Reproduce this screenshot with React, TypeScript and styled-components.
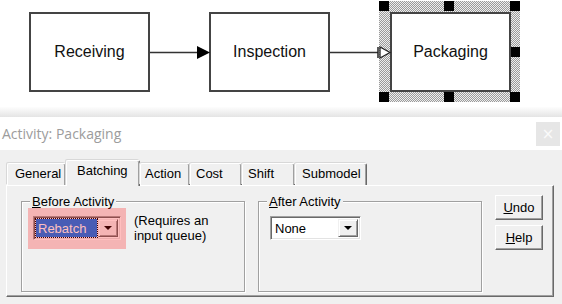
import React from 'react'
import styled, { createGlobalStyle } from 'styled-components'

const Global = createGlobalStyle`
  html, body {
    margin: 0;
    padding: 0;
    background: #f0f0f0;
  }
  body {
    width: 562px;
    height: 304px;
    overflow: hidden;
    font-family: "Liberation Sans", Arial, sans-serif;
    font-size: 13px;
    color: #000;
  }
`

/* ---------- diagram ---------- */

const Canvas = styled.div`
  position: relative;
  height: 107px;
  background: #fff;
`

const Node = styled.div<{ $x: number }>`
  position: absolute;
  left: ${(p) => p.$x}px;
  top: 12px;
  width: 121px;
  height: 80px;
  box-sizing: border-box;
  border: 2px solid #444;
  background: #fff;
  display: flex;
  align-items: center;
  justify-content: center;
  font: 16px "Liberation Sans", Arial, sans-serif;
  color: #111;
`

const Selection = styled.div`
  position: absolute;
  left: 379px;
  top: 1px;
  width: 141px;
  height: 101px;
  background: repeating-conic-gradient(#9a9a9a 0 25%, #eeeeee 0 50%) 0 0 / 2px 2px;
`

const Handle = styled.div<{ $x: number; $y: number }>`
  position: absolute;
  left: ${(p) => p.$x}px;
  top: ${(p) => p.$y}px;
  width: 10px;
  height: 10px;
  background: #000;
`

const Links = styled.svg`
  position: absolute;
  inset: 0;
  pointer-events: none;
`

const WindowShadow = styled.div`
  height: 10px;
  background: linear-gradient(#fdfdfd, #e4e4e4);
`

/* ---------- dialog ---------- */

const TitleBar = styled.div`
  height: 33px;
  background: #fff;
  display: flex;
  align-items: center;
  justify-content: space-between;
  padding: 0 2px;
`

const Title = styled.span`
  font: 14px "Open Sans", "Noto Sans", sans-serif;
  color: #9c9c9c;
`

const CloseButton = styled.div`
  width: 24px;
  height: 24px;
  background: #e6e6e6;
  color: #fafafa;
  display: flex;
  align-items: center;
  justify-content: center;
  font: 15px "DejaVu Sans", sans-serif;
`

const TabRow = styled.div`
  display: flex;
  align-items: flex-end;
  height: 35px;
  padding-left: 7px;
  position: relative;
  z-index: 1;
`

const Tab = styled.div<{ $w: number; $pad: number; $active?: boolean }>`
  box-sizing: border-box;
  width: ${(p) => p.$w}px;
  height: ${(p) => (p.$active ? 26 : 22)}px;
  margin-bottom: ${(p) => (p.$active ? -1 : 0)}px;
  padding: ${(p) => (p.$active ? 2 : 2)}px 0 0 ${(p) => p.$pad}px;
  border-top: 1px solid #fff;
  border-left: 1px solid #fff;
  border-right: 1px solid #696969;
  border-radius: 2px 2px 0 0;
  box-shadow: inset -1px 0 0 #a0a0a0, -1px -1px 0 #d8d8d8;
  background: #f0f0f0;
  line-height: 16px;
  white-space: nowrap;
`

const Panel = styled.div`
  margin: 0 8px 0 6px;
  height: 112px;
  box-sizing: border-box;
  border-top: 1px solid #fff;
  border-left: 1px solid #fff;
  border-right: 1px solid #696969;
  border-bottom: 1px solid #696969;
  box-shadow: inset -1px -1px 0 #a0a0a0;
  display: flex;
  align-items: flex-start;
  gap: 13px;
  padding: 9px 0 0 14px;
`

const Group = styled.div`
  position: relative;
  margin-top: 6px;
  width: 224px;
  height: 91px;
  box-sizing: border-box;
  border: 1px solid #a0a0a0;
  box-shadow: inset 1px 1px 0 #fff, 1px 1px 0 #fff;
  display: flex;
  align-items: flex-start;
  padding: 14px 0 0 11px;
`

const GroupLabel = styled.span`
  position: absolute;
  top: -8px;
  left: 8px;
  padding: 0 2px;
  background: #f0f0f0;
  line-height: 15px;
`

const Highlight = styled.span`
  position: relative;
  display: inline-block;

  &::after {
    content: '';
    position: absolute;
    inset: -8px -5px -9px -5px;
    background: rgba(255, 0, 0, 0.25);
  }
`

const Combo = styled.div<{ $w: number }>`
  display: flex;
  width: ${(p) => p.$w}px;
  height: 24px;
  box-sizing: border-box;
  border: 1px solid;
  border-color: #a0a0a0 #fff #fff #a0a0a0;
  box-shadow: inset 1px 1px 0 #696969, inset -1px -1px 0 #e3e3e3;
  background: #fff;
  padding: 2px;
`

const Field = styled.div<{ $selected?: boolean }>`
  flex: 1;
  display: flex;
  align-items: center;
  padding-left: 2px;
  margin-right: 1px;
  line-height: 15px;
  background: ${(p) => (p.$selected ? '#0d7bf2' : 'transparent')};
  color: ${(p) => (p.$selected ? '#fff' : '#000')};
  outline: ${(p) => (p.$selected ? '1px dotted #000' : 'none')};
`

const DropButton = styled.div`
  width: 20px;
  box-sizing: border-box;
  background: #f0f0f0;
  border: 1px solid;
  border-color: #f0f0f0 #696969 #696969 #f0f0f0;
  box-shadow: inset 1px 1px 0 #fff, inset -1px -1px 0 #a0a0a0;
  display: flex;
  align-items: center;
  justify-content: center;

  &::after {
    content: '';
    border-left: 4px solid transparent;
    border-right: 4px solid transparent;
    border-top: 4px solid #000;
  }
`

const Note = styled.div`
  margin: -3px 0 0 13px;
  line-height: 15px;
`

const ButtonColumn = styled.div`
  display: flex;
  flex-direction: column;
  gap: 5px;
`

const Button = styled.div`
  width: 48px;
  height: 25px;
  box-sizing: border-box;
  border: 1px solid;
  border-color: #fff #696969 #696969 #fff;
  box-shadow: inset -1px -1px 0 #a0a0a0;
  background: #f0f0f0;
  display: flex;
  align-items: center;
  justify-content: center;
`

const tabs = [
  { label: 'General', w: 59, pad: 7 },
  { label: 'Batching', w: 74, pad: 10, active: true },
  { label: 'Action', w: 50, pad: 4 },
  { label: 'Cost', w: 52, pad: 5 },
  { label: 'Shift', w: 53, pad: 5 },
  { label: 'Submodel', w: 72, pad: 6 }
]

const handles = [
  [379, 1],
  [444, 1],
  [510, 1],
  [510, 47],
  [510, 92],
  [444, 92],
  [379, 92]
]

export default function App() {
  return (
    <>
      <Global />
      <Canvas>
        <Node $x={29}>Receiving</Node>
        <Node $x={209}>Inspection</Node>
        <Selection />
        {handles.map(([x, y], i) => (
          <Handle key={i} $x={x} $y={y} />
        ))}
        <Node $x={390}>Packaging</Node>
        <Links width="562" height="107" viewBox="0 0 562 107">
          <line x1="150" y1="52.5" x2="198" y2="52.5" stroke="#333" strokeWidth="1.3" />
          <polygon points="197,46 210,52.5 197,59" fill="#000" />
          <line x1="330" y1="52.5" x2="378" y2="52.5" stroke="#333" strokeWidth="1.3" />
          <line x1="378" y1="47" x2="378" y2="58" stroke="#222" strokeWidth="1.5" />
          <polygon points="380,47 390,52.5 380,58" fill="#fff" stroke="#222" strokeWidth="1.3" />
        </Links>
      </Canvas>
      <WindowShadow />
      <TitleBar>
        <Title>Activity: Packaging</Title>
        <CloseButton>×</CloseButton>
      </TitleBar>
      <TabRow>
        {tabs.map((t) => (
          <Tab key={t.label} $w={t.w} $pad={t.pad} $active={t.active}>
            {t.label}
          </Tab>
        ))}
      </TabRow>
      <Panel>
        <Group>
          <GroupLabel>
            <u>B</u>efore Activity
          </GroupLabel>
          <Highlight>
            <Combo $w={88}>
              <Field $selected>Rebatch</Field>
              <DropButton />
            </Combo>
          </Highlight>
          <Note>
            (Requires an
            <br />
            input queue)
          </Note>
        </Group>
        <Group>
          <GroupLabel>
            <u>A</u>fter Activity
          </GroupLabel>
          <Combo $w={91}>
            <Field>None</Field>
            <DropButton />
          </Combo>
        </Group>
        <ButtonColumn>
          <Button>
            <span>
              <u>U</u>ndo
            </span>
          </Button>
          <Button>
            <span>
              <u>H</u>elp
            </span>
          </Button>
        </ButtonColumn>
      </Panel>
    </>
  )
}
